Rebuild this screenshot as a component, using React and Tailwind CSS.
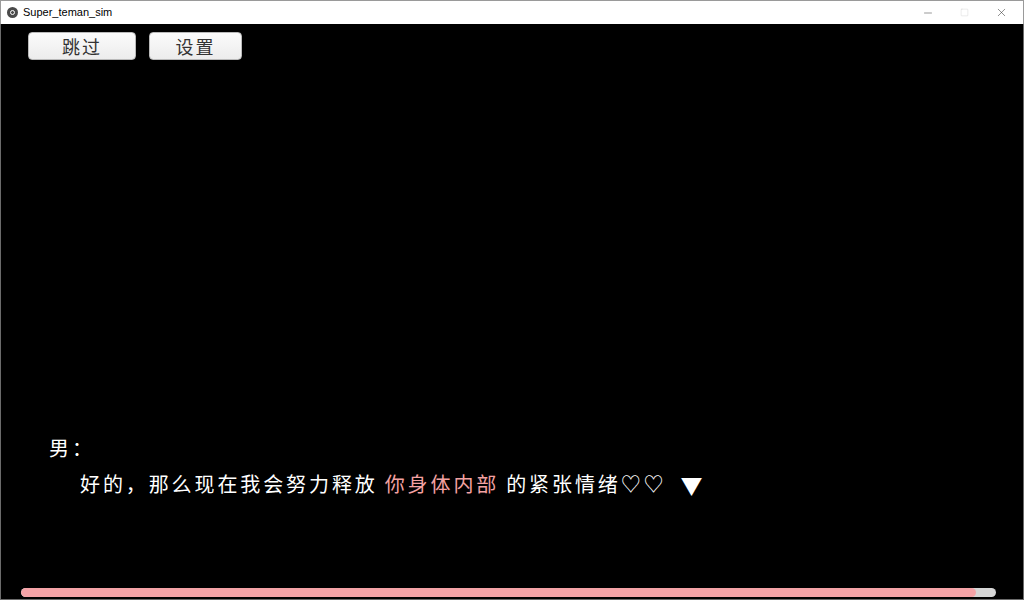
import { Minus, Square, X } from 'lucide-react';

const cjk = { fontFamily: '"Noto Sans CJK SC", "Noto Sans", sans-serif' };

function TitleBar() {
  return (
    <div className="h-[24px] shrink-0 bg-white flex items-center border-x border-t border-[#9a9a9a]">
      <div className="ml-[6px] w-[11px] h-[11px] rounded-full bg-[#4a4a4a] flex items-center justify-center">
        <div className="w-[5px] h-[5px] rounded-full border border-white" />
      </div>
      <span className="ml-[5px] text-[11px] text-black" style={{ fontFamily: '"Liberation Sans", sans-serif' }}>
        Super_teman_sim
      </span>
      <div className="ml-auto flex h-full">
        <div className="w-[37px] flex items-center justify-center text-[#333]"><Minus size={12} strokeWidth={1} /></div>
        <div className="w-[37px] flex items-center justify-center text-[#c8c8c8]"><Square size={9} strokeWidth={1} /></div>
        <div className="w-[37px] mr-[3px] flex items-center justify-center text-[#333]"><X size={13} strokeWidth={1} /></div>
      </div>
    </div>
  );
}

function GameButton({ label, width }) {
  return (
    <button
      className={`${width} h-[28px] rounded-[4px] border border-[#b9b9b9] bg-gradient-to-b from-[#fbfbfb] to-[#ececec] text-[#333] text-[18px] flex items-center justify-center tracking-[2px]`}
      style={cjk}
    >
      {label}
    </button>
  );
}

export default function App() {
  const progress = 97.9;
  return (
    <div className="w-[1024px] h-[600px] flex flex-col overflow-hidden">
      <TitleBar />
      <div className="flex-1 bg-black flex flex-col border-x border-b border-[#6b6b6b]">
        <div className="flex gap-[13px] pl-[27px] pt-[8px]">
          <GameButton label="跳过" width="w-[108px]" />
          <GameButton label="设置" width="w-[93px]" />
        </div>

        <div className="flex-1" />

        {/* dialogue */}
        <div className="pl-[48px] text-white text-[20px] leading-[36px]" style={cjk}>
          <div className="tracking-[3px]">男：</div>
          <div className="pl-[31px] flex items-center tracking-[2.9px] whitespace-nowrap">
            <span>好的，那么现在我会努力释放</span>
            <span className="ml-[7px] text-[#f3a2a2]">你身体内部</span>
            <span className="ml-[7px]">的紧张情绪♡♡</span>
            <span className="ml-[14px] text-[22px]">▼</span>
          </div>
        </div>

        <div className="h-[86px]" />

        {/* progress */}
        <div className="mx-[20px] mr-[27px] h-[9px] mb-[2px] rounded-full bg-[#d6d6d6] overflow-hidden">
          <div className="h-full rounded-full bg-[#f5a3a7]" style={{ width: `${progress}%` }} />
        </div>
      </div>
    </div>
  );
}
